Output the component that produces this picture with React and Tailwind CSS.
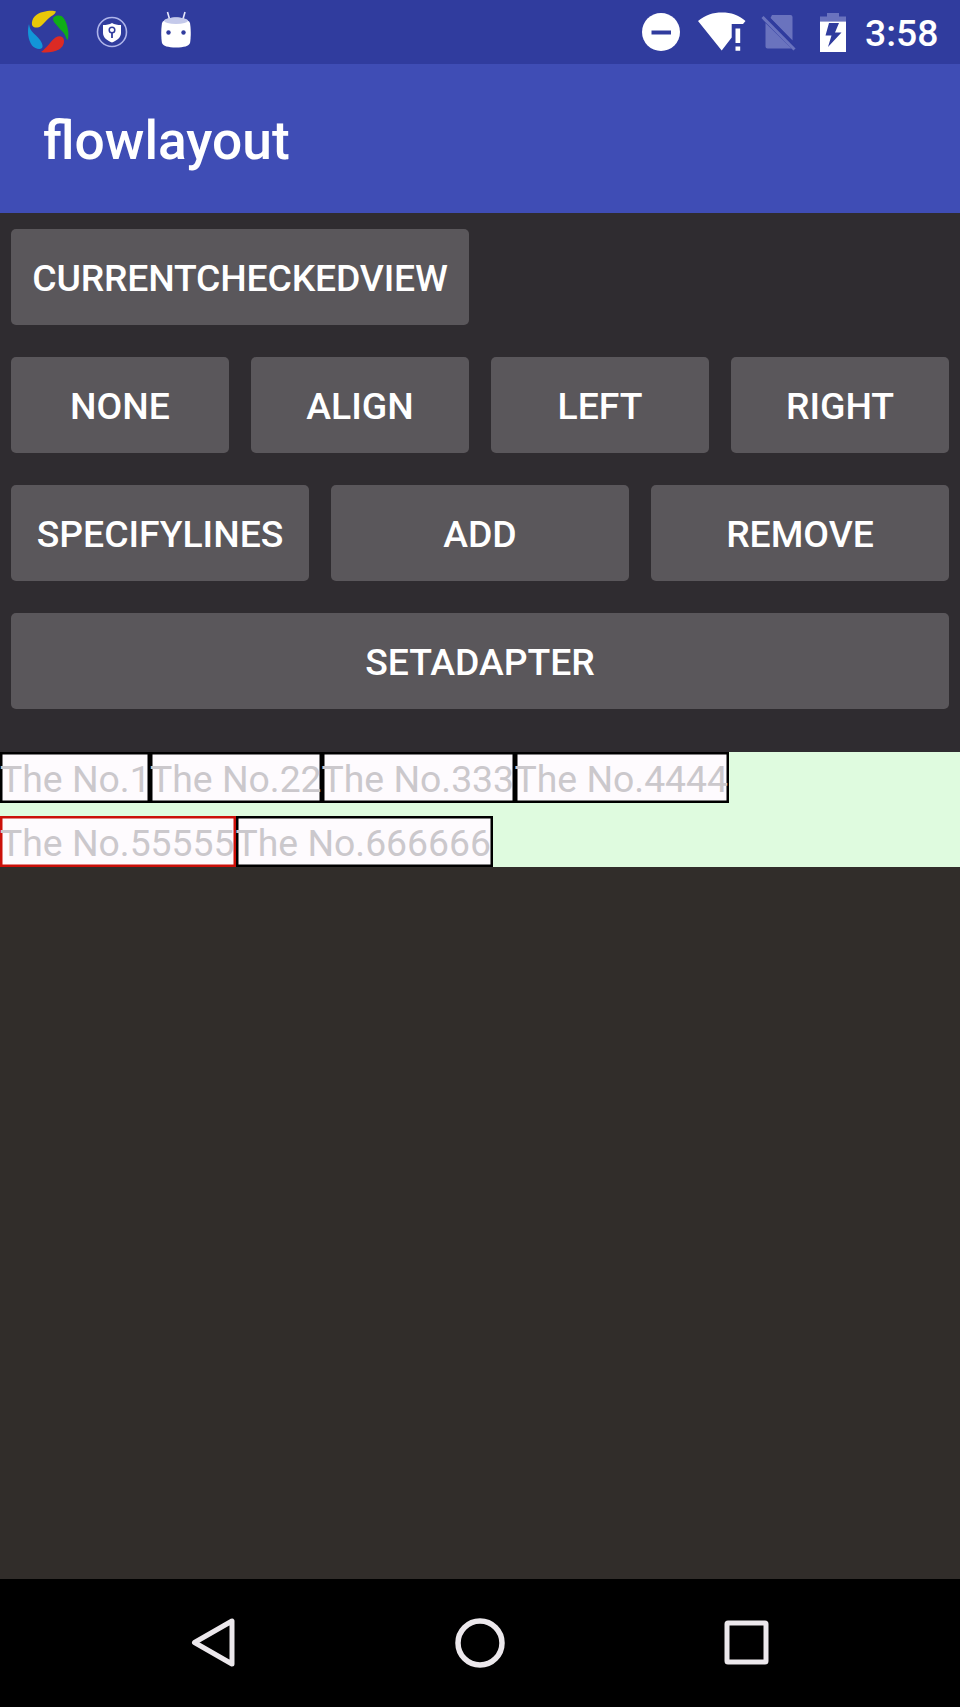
import React from "react";

function AppSwirlIcon() {
  return (
    <svg width="42" height="44" viewBox="0 0 42 44" className="block">
      <path d="M5 15C4 8 10 3 16 2c5-1.500 11-1.500 13-.5-1 3-4 4-7 6.500-3 2.500-5 5.500-8 8-3 2.500-8 2-9-1z" fill="#e9c809" />
      <path d="M26 9c0-3 5-4.500 8.500-3 4 3 6 9 6.800 16 .2 4 0 6-.6 8-1.500-1-1.700-3-2.700-5-2-4-4.500-5-7-8.300C29 14 26 12 26 9z" fill="#0fae17" />
      <path d="M2 14c.5 3 1 5 3 7.500C7 24 11 27 13 30c2 3 3.500 6 2 8-2 2-7 1-10-2.500C1 30 0 21 2 14z" fill="#1296d8" />
      <path d="M14 42c2-1 3-3 5.500-5 3-2.500 5-7 9-9.500 3-2 7-2 8.200 1.500 1 4-.7 8-4.700 10.500C27 42 19 43.500 14 42z" fill="#dc2a24" />
    </svg>
  );
}

function ShieldIcon() {
  return (
    <svg width="32" height="32" viewBox="0 0 32 32" className="block">
      <circle cx="16" cy="16" r="14.500" fill="none" stroke="#aeb4ea" strokeWidth="1.600" />
      <path d="M16 7c2.500 1.600 5.500 2 9 2v8c0 4.500-4 7.500-9 9.500-5-2-9-5-9-9.500V9c3.500 0 6.500-.4 9-2z" fill="#fff" />
      <circle cx="16" cy="14" r="2.800" fill="none" stroke="#303c9e" strokeWidth="1.500" />
      <path d="M16 17v5" stroke="#303c9e" strokeWidth="1.800" />
    </svg>
  );
}

function RobotIcon() {
  return (
    <svg width="32" height="38" viewBox="0 0 32 38" className="block">
      <path d="M7.500 1l2 7M25 1l-2 7" stroke="#e6e7fa" strokeWidth="1.600" />
      <path d="M2 12C4 8 11 6.500 16 6.500S28 8 30 12c1 6 1 15 0 20-1 3-6 4.500-14 4.500S3 35 2 32C1 27 1 18 2 12z" fill="#fff" />
      <ellipse cx="16" cy="9.800" rx="12" ry="3.200" fill="#c4c9ea" />
      <circle cx="8.500" cy="21.500" r="2.200" fill="#303c9e" />
      <circle cx="23.500" cy="21.500" r="2.200" fill="#303c9e" />
    </svg>
  );
}

function DoNotDisturbIcon() {
  return (
    <svg width="38" height="38" viewBox="0 0 38 38" className="block">
      <circle cx="19" cy="19" r="19" fill="#fff" />
      <path d="M9.500 19.500h19.500" stroke="#303c9e" strokeWidth="4" />
    </svg>
  );
}

function WifiAlertIcon() {
  return (
    <svg width="48" height="40" viewBox="0 0 48 40" className="block">
      <path d="M0 9C7 3 15 .5 24 .5S41 3 47.500 9l-2.500 3H33.700v13.500L23.700 38.500z" fill="#fff" />
      <path d="M37.500 16.500h4.700v14.500h-4.700zM37.500 34.500h4.700v4.200h-4.700z" fill="#fff" />
    </svg>
  );
}

function NoSimIcon() {
  return (
    <svg width="36" height="37" viewBox="0 0 36 37" className="block">
      <path d="M11 1h18.500a2 2 0 0 1 2 2v23.500L9.500 4zM4.500 9l26 25.500H6.500a2 2 0 0 1-2-2z" fill="#6a73be" />
      <path d="M1.500 3L33.500 35.500" stroke="#6a73be" strokeWidth="3" />
      <path d="M8 4.500L34 31" stroke="#303c9e" strokeWidth="2" />
    </svg>
  );
}

function BatteryIcon() {
  return (
    <svg width="26" height="39" viewBox="0 0 26 39" className="block">
      <path d="M7 0h12v3.500h7V8.500H0V3.500h7z" fill="#6a73be" />
      <path d="M0 8.500h26V39H0z" fill="#fff" />
      <path d="M9 10h10l-4 9.500h6.500L8 34l3.500-11.500H5.500z" fill="#303c9e" />
    </svg>
  );
}

function StatusBar() {
  return (
    <header className="flex h-[64px] items-start bg-[#303c9e] text-white">
      <div className="pt-[10px] pl-[27px]"><AppSwirlIcon /></div>
      <div className="pt-[16px] pl-[27px]"><ShieldIcon /></div>
      <div className="pt-[11px] pl-[32px]"><RobotIcon /></div>
      <div className="ml-auto pt-[13px]"><DoNotDisturbIcon /></div>
      <div className="pt-[12px] pl-[18px]"><WifiAlertIcon /></div>
      <div className="pt-[14px] pl-[15px]"><NoSimIcon /></div>
      <div className="pt-[13px] pl-[23px]"><BatteryIcon /></div>
      <time className="w-[114px] pt-[11px] pl-[19px] text-[37.33px] leading-[44px] font-medium">3:58</time>
    </header>
  );
}

function Button({ children, className = "" }) {
  return (
    <button
      className={`flex h-[96px] w-full items-center justify-center rounded-[5px] bg-[#5a575b] pt-[2px] text-[37.33px] leading-[44px] font-medium whitespace-nowrap text-white ${className}`}
    >
      {children}
    </button>
  );
}

const chipRows = [
  [
    { label: "The No.1", width: "w-[150px]" },
    { label: "The No.22", width: "w-[171.500px]" },
    { label: "The No.333", width: "w-[193px]" },
    { label: "The No.4444", width: "w-[214.500px]" },
  ],
  [
    { label: "The No.55555", width: "w-[235.500px]", checked: true },
    { label: "The No.666666", width: "w-[257px]" },
  ],
];

function Chip({ label, width, checked }) {
  return (
    <div
      className={`h-[51px] shrink-0 bg-[#fefbfe] pt-[5px] text-[37.33px] leading-[44px] whitespace-nowrap text-[#cbc8cc] ${width} ${
        checked ? "shadow-[inset_0_0_0_2.5px_#cb1009]" : "shadow-[inset_0_0_0_2.5px_#000000]"
      }`}
    >
      {label}
    </div>
  );
}

function NavBar() {
  return (
    <nav className="flex h-[128px] items-start bg-black pt-[38px] pl-[191px]">
      <svg width="45" height="52" viewBox="0 0 45 52" className="block">
        <path d="M3.500 25.500L41 4v43z" fill="none" stroke="#ece8ec" strokeWidth="5" strokeLinejoin="round" />
      </svg>
      <svg width="52" height="52" viewBox="0 0 52 52" className="ml-[218px] block">
        <circle cx="26" cy="26" r="22" fill="none" stroke="#ece8ec" strokeWidth="5.500" />
      </svg>
      <svg width="46" height="52" viewBox="0 0 46 52" className="ml-[218px] block">
        <rect x="3" y="6" width="39" height="39" rx="1" fill="none" stroke="#ece8ec" strokeWidth="5" strokeLinejoin="round" />
      </svg>
    </nav>
  );
}

export default function App() {
  return (
    <div className="flex h-[1707px] w-[960px] flex-col overflow-hidden bg-[#312d2a] font-[Roboto,sans-serif]">
      <StatusBar />
      <div className="flex h-[149px] items-center bg-[#3f4db5] pl-[43px]">
        <h1 className="pt-[5px] text-[53.33px] leading-[62px] font-medium text-white">flowlayout</h1>
      </div>
      <main className="flex grow flex-col">
        <section className="flex h-[539px] flex-col gap-[32px] bg-[#2f2c30] px-[10.67px] pt-[16px]">
          <div className="w-[458.67px]"><Button className="tracking-[-0.18px]">CURRENTCHECKEDVIEW</Button></div>
          <div className="grid grid-cols-4 gap-[21.33px]">
            <Button>NONE</Button>
            <Button>ALIGN</Button>
            <Button>LEFT</Button>
            <Button>RIGHT</Button>
          </div>
          <div className="grid grid-cols-3 gap-[21.33px]">
            <Button>SPECIFYLINES</Button>
            <Button>ADD</Button>
            <Button>REMOVE</Button>
          </div>
          <Button>SETADAPTER</Button>
        </section>
        <section className="flex flex-col gap-[13px] bg-[#dffbdf]">
          {chipRows.map((row, index) => (
            <div key={index} className="flex">
              {row.map((chip) => (
                <Chip key={chip.label} {...chip} />
              ))}
            </div>
          ))}
        </section>
      </main>
      <NavBar />
    </div>
  );
}
